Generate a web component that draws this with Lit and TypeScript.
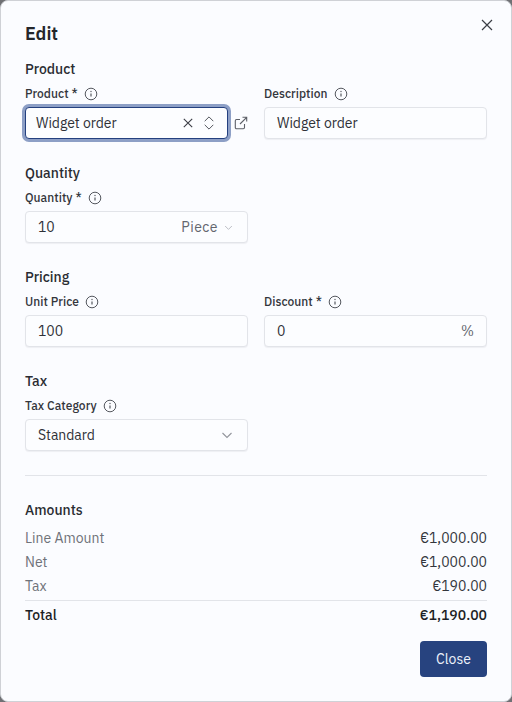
import { LitElement, html, css } from "lit";
import { customElement } from "lit/decorators.js";

const info = html`<svg class="info" viewBox="0 0 14 14" width="14" height="14" fill="none" stroke="#55585f" stroke-width="1">
  <circle cx="7" cy="7" r="5.8"></circle>
  <path d="M7 6.4v3.2" stroke-width="1.2"></path>
  <circle cx="7" cy="4.5" r=".7" fill="#55585f" stroke="none"></circle>
</svg>`;

const label = (text: string) => html`<div class="label"><span>${text}</span>${info}</div>`;
const chevron = (cls: string) => html`<svg class=${cls} viewBox="0 0 12 12" width="12" height="12" fill="none" stroke="currentColor" stroke-width="1.1"><path d="M1.5 4l4.5 4.5L10.5 4"></path></svg>`;

@customElement("app-root")
export class AppRoot extends LitElement {
  static styles = css`
    :host { display: block; width: 512px; height: 702px; background: #6f7074; font-family: "IBM Plex Sans", Inter, "Noto Sans", sans-serif; color: #1d1f24; }
    .dialog { box-sizing: border-box; position: relative; width: 512px; height: 702px; background: #fbfcff; border: 1px solid #cfd1d6; border-radius: 8px; padding: 18px 24px 0; display: flex; flex-direction: column; }
    h1 { box-sizing: border-box; height: 28px; margin: 0 0 12px; padding-top: 2px; font-size: 18px; line-height: 26px; font-weight: 600; color: #24262b; }
    .close { position: absolute; top: 18px; right: 18px; display: flex; color: #3b3e45; }
    .section { display: flex; flex-direction: column; gap: 4px; margin-bottom: 24px; }
    h2 { margin: 0; font-size: 14px; line-height: 20px; font-weight: 500; color: #2a2c32; }
    .row { display: grid; grid-template-columns: 223px 223px; column-gap: 16px; }
    .field { display: flex; flex-direction: column; gap: 4px; }
    .label { box-sizing: border-box; height: 20px; padding-top: 2px; display: flex; align-items: center; gap: 6px; font-size: 12px; line-height: 18px; font-weight: 500; letter-spacing: 0.05px; color: #33353b; }
    .input { box-sizing: border-box; height: 32px; display: flex; align-items: center; padding: 0 12px; border: 1px solid #e2e4e9; border-radius: 4px; background: #fcfdff; box-shadow: 0 1px 1px rgba(30, 35, 50, .06); font-size: 14px; color: #2f3137; letter-spacing: -0.05px; }
    .grow { flex: 1; }
    .muted { color: #63666e; }
    .unit { margin-right: 6px; letter-spacing: .5px; }
    .chev-sm { color: #b0b3ba; width: 9px; height: 9px; margin-right: 2px; }
    .chev { color: #92959c; margin-right: 2px; }
    .product { display: flex; align-items: center; gap: 6px; }
    .focus { width: 203px; padding: 0 10px; border: 1.5px solid #24407f; box-shadow: 0 0 0 3px #8d9fc6; flex: none; background: #fcfdff; }
    .x { display: flex; color: #3b3e45; margin-right: 11px; }
    .updown { display: flex; color: #55585f; margin-right: 3px; }
    .ext { display: flex; color: #5c5f67; }
    hr { margin: 0 0 24px; border: 0; border-top: 1px solid #e2e4e9; }
    .amounts { display: flex; flex-direction: column; }
    .amounts h2 { margin-bottom: 6px; }
    .line { display: flex; justify-content: space-between; font-size: 14px; line-height: 24px; color: #6f7279; }
    .line b { font-weight: 400; color: #33363c; }
    .line.total { margin-top: 2px; border-top: 1px solid #e2e4e9; line-height: 28px; font-weight: 500; color: #1d1f24; }
    .line.total b { font-weight: 500; color: #1d1f24; }
    .actions { display: flex; justify-content: flex-end; margin-top: 12px; }
    button { width: 67px; height: 36px; border: 0; border-radius: 4px; background: #27437f; color: #eef2fb; font: 400 14px "IBM Plex Sans", Inter, "Noto Sans", sans-serif; letter-spacing: 0.05px; }
  `;

  render() {
    return html`<div class="dialog">
      <div class="close"><svg viewBox="0 0 12 12" width="12" height="12" fill="none" stroke="currentColor" stroke-width="1.2"><path d="M1 1l10 10M11 1L1 11"></path></svg></div>
      <h1>Edit</h1>

      <section class="section">
        <h2>Product</h2>
        <div class="row">
          <div class="field">
            ${label("Product *")}
            <div class="product">
              <div class="input focus">
                <span class="grow">Widget order</span>
                <span class="x"><svg viewBox="0 0 10 10" width="10" height="10" fill="none" stroke="currentColor" stroke-width="1.1"><path d="M.8.8l8.4 8.4M9.2.8L.8 9.2"></path></svg></span>
                <span class="updown"><svg viewBox="0 0 10 14" width="10" height="14" fill="none" stroke="currentColor" stroke-width="1"><path d="M.7 5.2L5 .9l4.3 4.3M.7 8.8L5 13.1l4.3-4.3"></path></svg></span>
              </div>
              <span class="ext"><svg viewBox="0 0 14 14" width="14" height="14" fill="none" stroke="currentColor" stroke-width="1.1"><path d="M10.5 8v3.5a1.2 1.2 0 0 1-1.2 1.2H2.5a1.2 1.2 0 0 1-1.2-1.2V4.7a1.2 1.2 0 0 1 1.2-1.2H6M8.5 1.3h4.2v4.2M12.7 1.3L6 8"></path></svg></span>
            </div>
          </div>
          <div class="field">
            ${label("Description")}
            <div class="input">Widget order</div>
          </div>
        </div>
      </section>

      <section class="section">
        <h2>Quantity</h2>
        <div class="row">
          <div class="field">
            ${label("Quantity *")}
            <div class="input"><span class="grow">10</span><span class="muted unit">Piece</span>${chevron("chev-sm")}</div>
          </div>
        </div>
      </section>

      <section class="section">
        <h2>Pricing</h2>
        <div class="row">
          <div class="field">
            ${label("Unit Price")}
            <div class="input">100</div>
          </div>
          <div class="field">
            ${label("Discount *")}
            <div class="input"><span class="grow">0</span><span class="muted">%</span></div>
          </div>
        </div>
      </section>

      <section class="section">
        <h2>Tax</h2>
        <div class="row">
          <div class="field">
            ${label("Tax Category")}
            <div class="input"><span class="grow">Standard</span>${chevron("chev")}</div>
          </div>
        </div>
      </section>

      <hr />

      <section class="amounts">
        <h2>Amounts</h2>
        <div class="line"><span>Line Amount</span><b>€1,000.00</b></div>
        <div class="line"><span>Net</span><b>€1,000.00</b></div>
        <div class="line"><span>Tax</span><b>€190.00</b></div>
        <div class="line total"><span>Total</span><b>€1,190.00</b></div>
      </section>

      <div class="actions"><button>Close</button></div>
    </div>`;
  }
}
